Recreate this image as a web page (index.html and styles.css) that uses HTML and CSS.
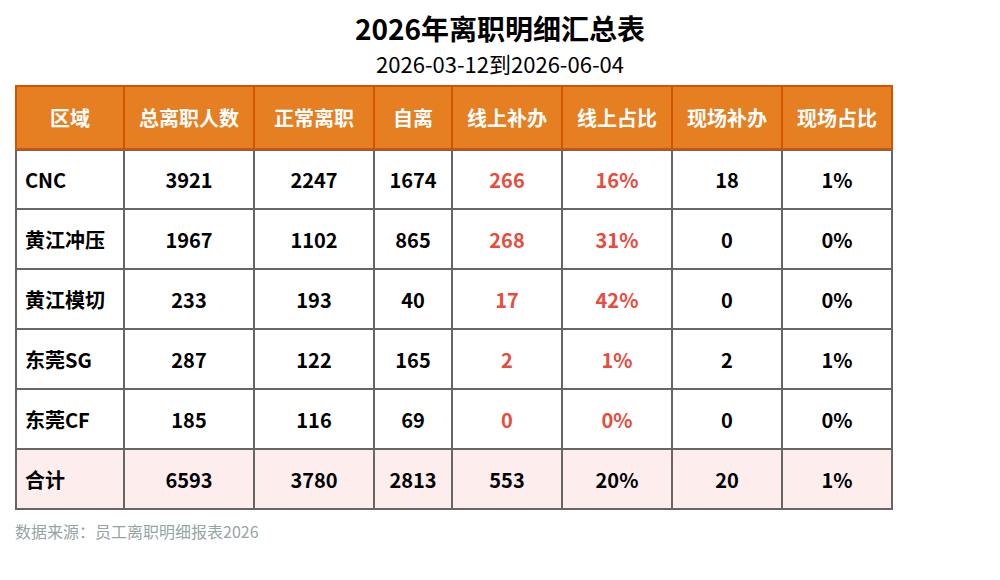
FILE: index.html
```html
<!DOCTYPE html>
<html lang="zh-CN">
<head>
<meta charset="utf-8">
<link rel="stylesheet" href="styles.css">
</head>
<body>
<div class="page">
  <h1 class="title">2026年离职明细汇总表</h1>
  <div class="subtitle">2026-03-12到2026-06-04</div>
  <table class="report">
    <colgroup>
      <col class="c1"><col class="c2"><col class="c3"><col class="c4">
      <col class="c5"><col class="c6"><col class="c7"><col class="c8">
    </colgroup>
    <thead>
      <tr>
        <th>区域</th><th>总离职人数</th><th>正常离职</th><th>自离</th>
        <th>线上补办</th><th>线上占比</th><th>现场补办</th><th>现场占比</th>
      </tr>
    </thead>
    <tbody>
      <tr><td class="name">CNC</td><td>3921</td><td>2247</td><td>1674</td><td class="red">266</td><td class="red">16%</td><td>18</td><td>1%</td></tr>
      <tr><td class="name">黄江冲压</td><td>1967</td><td>1102</td><td>865</td><td class="red">268</td><td class="red">31%</td><td>0</td><td>0%</td></tr>
      <tr><td class="name">黄江模切</td><td>233</td><td>193</td><td>40</td><td class="red">17</td><td class="red">42%</td><td>0</td><td>0%</td></tr>
      <tr><td class="name">东莞SG</td><td>287</td><td>122</td><td>165</td><td class="red">2</td><td class="red">1%</td><td>2</td><td>1%</td></tr>
      <tr><td class="name">东莞CF</td><td>185</td><td>116</td><td>69</td><td class="red">0</td><td class="red">0%</td><td>0</td><td>0%</td></tr>
      <tr class="total"><td class="name">合计</td><td>6593</td><td>3780</td><td>2813</td><td>553</td><td>20%</td><td>20</td><td>1%</td></tr>
    </tbody>
  </table>
  <div class="source">数据来源：员工离职明细报表2026</div>
</div>
</body>
</html>
```
FILE: styles.css
```css
* { box-sizing: border-box; }
html, body { margin: 0; padding: 0; background: #ffffff; }
body {
  font-family: "Noto Sans CJK SC", "Noto Sans", sans-serif;
  color: #000;
  width: 1000px;
  height: 580px;
  overflow: hidden;
}
.page { padding: 8px 0 0 0; }
.title {
  margin: 0;
  text-align: center;
  font-size: 28px;
  font-weight: 700;
  line-height: 40px;
}
.subtitle {
  text-align: center;
  font-size: 22px;
  line-height: 30px;
  margin-top: 0;
}
.report {
  margin: 7px 0 0 15px;
  border-collapse: separate;
  border-spacing: 0;
  table-layout: fixed;
  width: 878px;
}
.c1 { width: 110px; }
.c2 { width: 130px; }
.c3 { width: 120px; }
.c4 { width: 78px; }
.c5, .c6, .c7, .c8 { width: 110px; }
.report th {
  background: #e67e22;
  color: #fff;
  font-size: 20px;
  font-weight: 700;
  height: 65px;
  border-top: 2px solid #d35400;
  border-right: 2px solid #d35400;
  border-bottom: 2px solid #d35400;
  padding: 0;
}
.report th:first-child { border-left: 2px solid #d35400; }
.report td {
  font-size: 20px;
  font-weight: 700;
  text-align: center;
  height: 60px;
  border-right: 2px solid #666;
  border-bottom: 2px solid #666;
  padding: 0;
}
.report tbody tr:first-child td { border-top: 1px solid #666; }
.report td:first-child { border-left: 2px solid #666; }
.report td.name { text-align: left; padding-left: 8px; }
.report td.red { color: #e74c3c; }
.report tr.total td { background: #fdeded; }
.source {
  margin: 10px 0 0 15px;
  font-size: 16px;
  color: #95a5a6;
  line-height: 22px;
}
```
